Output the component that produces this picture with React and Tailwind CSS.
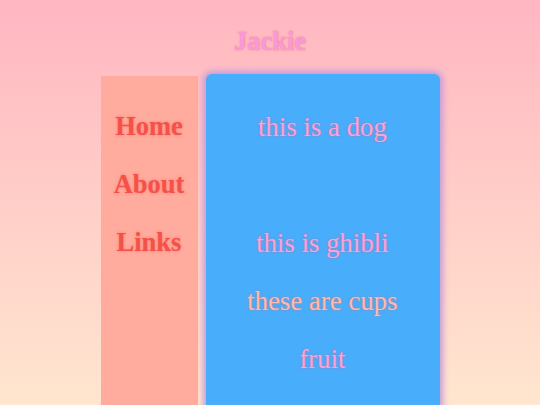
import React from 'react'

const serif = { fontFamily: '"Liberation Serif", "Times New Roman", serif' }

const App = () => {
    const navItems = ['Home', 'About', 'Links']

    return (
        <div className='min-h-[405px] h-[405px] overflow-hidden bg-gradient-to-b from-[#ffb6c1] to-[#ffe6cf]' style={serif}>
            {/* Header */}
            <div className='pt-[26px] h-[74px] text-center'>
                <h1 className='text-[26.5px] leading-[31px] font-bold text-[#f79ad8] [text-shadow:0_0_2px_#f7727f]'>Jackie</h1>
            </div>

            <div className='flex justify-center items-start gap-2'>
                {/* Sidebar */}
                <nav className='mt-[2px] w-[97px] h-[329px] bg-[#ffab9d] pt-[35px] flex flex-col items-center gap-[27px]'>
                    {navItems.map((item) => (
                        <a key={item} className='text-[26.5px] leading-[31px] font-bold text-[#f3514a] [text-shadow:0_0_3px_#ff7a6e]'>
                            {item}
                        </a>
                    ))}
                </nav>

                {/* Main panel */}
                <main className='w-[234px] h-[340px] bg-[#48adfb] rounded-md shadow-[0_0_6px_3px_#c79bd9] pt-[38px] flex flex-col items-center gap-[27px]'>
                    <p className='text-[26.8px] leading-[31px] text-[#f9a3d9] [text-shadow:0_0_2px_#c66a9d]'>this is a dog</p>
                    <div className='h-[31px]'></div>
                    <p className='text-[26.8px] leading-[31px] text-[#f9a3d9] [text-shadow:0_0_2px_#c66a9d]'>this is ghibli</p>
                    <p className='text-[26.8px] leading-[31px] text-[#ffb8b4] [text-shadow:0_0_2px_#c9786f]'>these are cups</p>
                    <p className='text-[26.8px] leading-[31px] text-[#f9a3d9] [text-shadow:0_0_2px_#c66a9d]'>fruit</p>
                </main>
            </div>
        </div>
    )
}

export default App
